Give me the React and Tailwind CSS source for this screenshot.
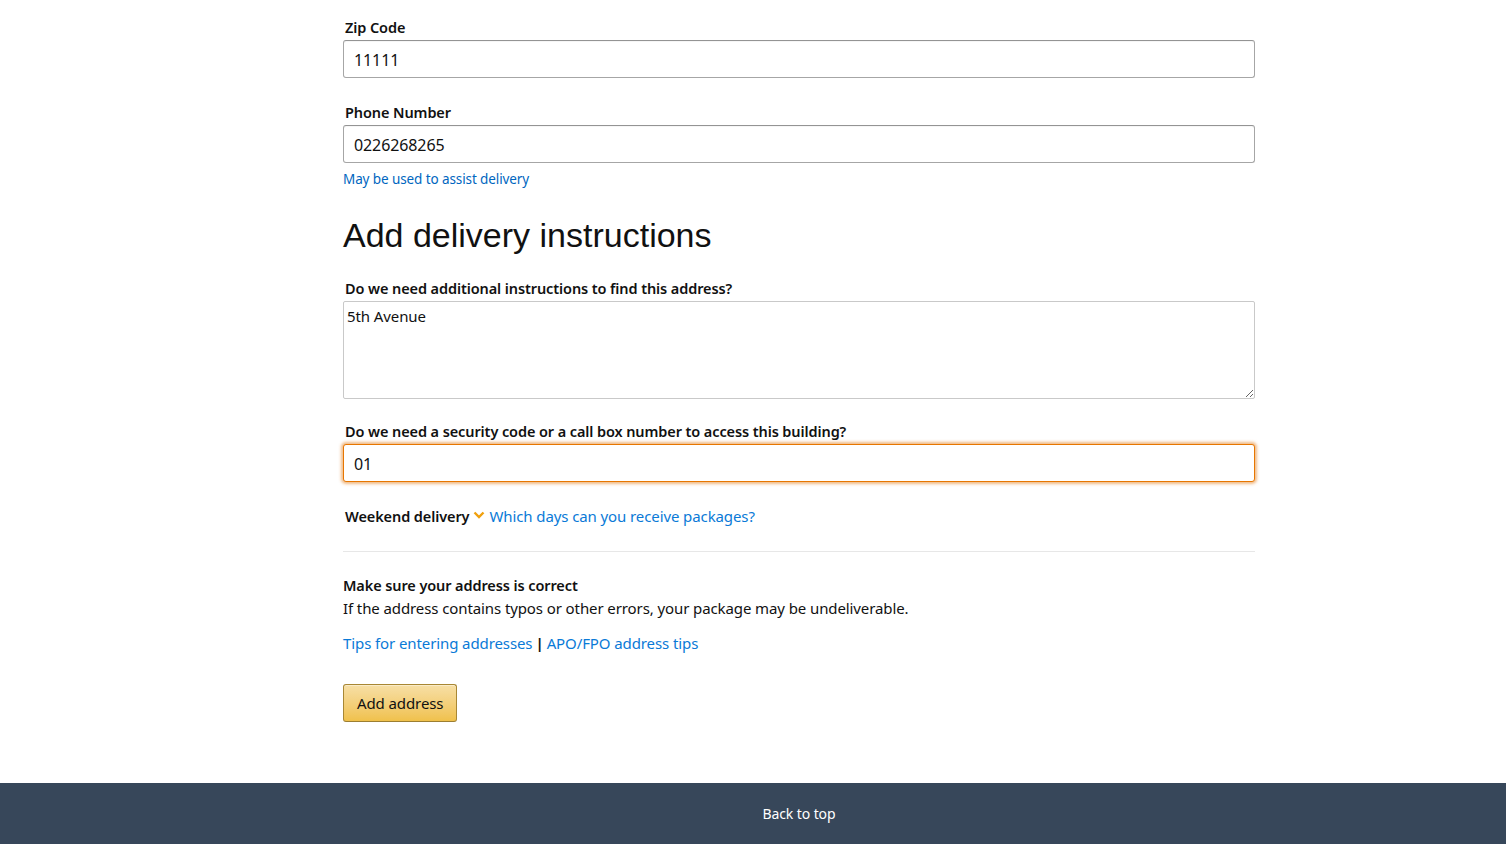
import { useState } from 'react';

const font = { fontFamily: '"Noto Sans", Arial, sans-serif' };

function Label({ children }) {
  return <label className="block pl-[2px] text-[14.5px] font-semibold text-[#111] leading-[19px] mb-[3px]">{children}</label>;
}

export default function App() {
  const [zip, setZip] = useState('11111');
  const [phone, setPhone] = useState('0226268265');
  const [notes, setNotes] = useState('5th Avenue');
  const [code, setCode] = useState('01');

  const inputCls =
    'block w-full h-[38px] px-[10px] pt-[1px] text-[16px] text-[#111] bg-white border border-[#a6a6a6] border-t-[#949494] rounded-[3px] shadow-[inset_0_1px_0_rgba(255,255,255,0.5),0_1px_0_rgba(0,0,0,0.07)_inset] outline-none';

  return (
    <div className="min-h-[844px] flex flex-col bg-white tracking-[-0.1px]" style={font}>
      <div className="flex-1 pl-[92px]">
        <div className="w-[912px] mx-auto pt-[18px] pb-[61px]">
          <Label>Zip Code</Label>
          <input className={inputCls} value={zip} onChange={e => setZip(e.target.value)} />

          <div className="mt-[25px]">
            <Label>Phone Number</Label>
            <input className={inputCls} value={phone} onChange={e => setPhone(e.target.value)} />
            <p className="mt-[8px] text-[13.5px] text-[#0066c0] leading-[17px]">May be used to assist delivery</p>
          </div>

          <h2 className="mt-[27px] text-[34px] leading-[40px] text-[#111] font-normal" style={{ fontFamily: '"Liberation Sans", Arial, sans-serif', letterSpacing: 0 }}>
            Add delivery instructions
          </h2>

          <div className="mt-[24px]">
            <Label>Do we need additional instructions to find this address?</Label>
            <textarea
              className="block w-full h-[98px] px-[3px] py-[3px] text-[15px] text-[#111] border border-[#c9c9c9] rounded-[2px] outline-none resize-y"
              value={notes}
              onChange={e => setNotes(e.target.value)}
            />
          </div>

          <div className="mt-[23px]">
            <Label>Do we need a security code or a call box number to access this building?</Label>
            <input
              className="block w-full h-[38px] px-[10px] pt-[1px] text-[16px] text-[#111] bg-white border border-[#e77600] rounded-[3px] shadow-[0_0_3px_2px_rgba(228,121,17,0.5)] outline-none"
              value={code}
              onChange={e => setCode(e.target.value)}
            />
          </div>

          <div className="mt-[25px] pl-[2px] flex items-center text-[15px] leading-[19px]">
            <span className="font-semibold text-[14.5px] text-[#111]">Weekend delivery</span>
            <svg width="12" height="8" viewBox="0 0 12 8" className="ml-[4px] mr-[4px] -mt-[3px]">
              <path d="M1.5 1.5 L6 6 L10.5 1.5" fill="none" stroke="#f0a00e" strokeWidth="2.4" />
            </svg>
            <a href="#" className="text-[#0a7ad7]">Which days can you receive packages?</a>
          </div>

          <hr className="mt-[25px] border-0 border-t border-[#e7e7e7]" />

          <p className="mt-[24px] text-[14.5px] font-semibold text-[#111] leading-[19px]">Make sure your address is correct</p>
          <p className="mt-[4px] text-[15px] text-[#111] leading-[19px]">
            If the address contains typos or other errors, your package may be undeliverable.
          </p>
          <p className="mt-[16px] text-[15px] leading-[19px] text-[#111]">
            <a href="#" className="text-[#0a7ad7]">Tips for entering addresses</a>
            <span className="font-bold mx-[3px]">|</span>
            <a href="#" className="text-[#0a7ad7]">APO/FPO address tips</a>
          </p>

          <button className="mt-[31px] h-[38px] px-[13px] text-[15px] text-[#111] border border-[#a88734] border-b-[#9c7e31] rounded-[3px] bg-gradient-to-b from-[#f7dfa5] to-[#f0c14b] shadow-[inset_0_1px_0_rgba(255,255,255,0.4)]">
            Add address
          </button>
        </div>
      </div>

      <footer className="h-[61px] bg-[#37475a] flex items-center justify-center pl-[92px]">
        <a href="#" className="text-[14px] text-white font-normal">Back to top</a>
      </footer>
    </div>
  );
}
